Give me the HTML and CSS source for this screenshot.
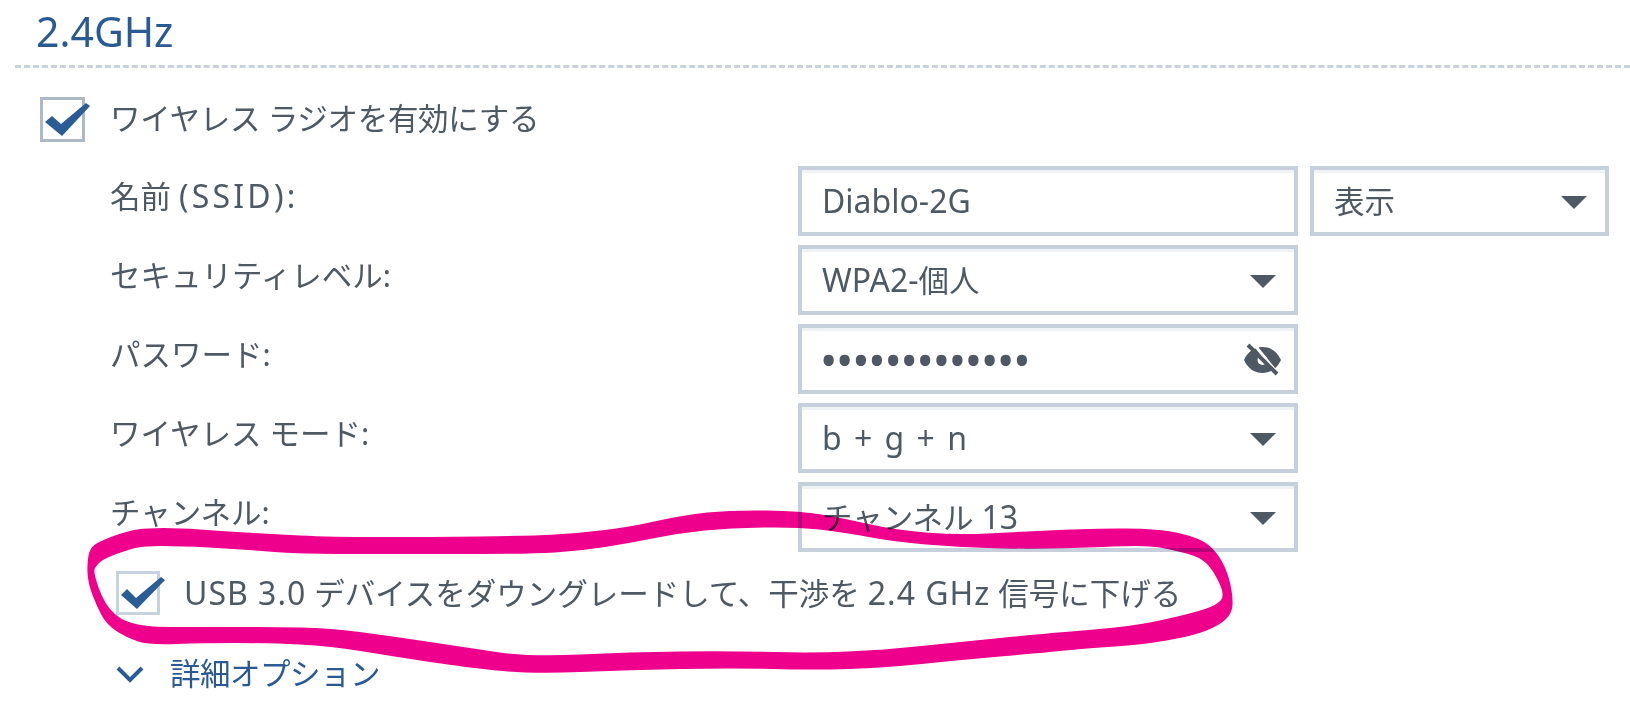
FILE: index.html
```html
<!DOCTYPE html>
<html lang="ja">
<head>
<meta charset="utf-8">
<title>2.4GHz</title>
<link rel="stylesheet" href="styles.css">
</head>
<body>
<main class="page">
  <h1 class="title">2.4GHz</h1>
  <div class="divider"></div>

  <div class="check-row first">
    <svg class="box" viewBox="0 0 45 45"><rect class="box-frame dark" x="1.5" y="1.5" width="42" height="42"/><polygon class="tick" points="5,25 12,19 21,27 46,6 50,9 22,39"/></svg>
    <span class="text">ワイヤレス ラジオを有効にする</span>
  </div>

  <div class="form">
    <span class="label">名前 <span class="lat ssid">(SSID):</span></span>
    <div class="field"><span class="value lat">Diablo-2G</span></div>
    <div class="field"><span class="value">表示</span><svg class="caret" viewBox="0 0 26 13"><polygon points="0,0 26,0 13,13"/></svg></div>

    <span class="label">セキュリティレベル:</span>
    <div class="field"><span class="value"><span class="lat">WPA2-</span>個人</span><svg class="caret" viewBox="0 0 26 13"><polygon points="0,0 26,0 13,13"/></svg></div>
    <span></span>

    <span class="label">パスワード:</span>
    <div class="field"><span class="value dots">•••••••••••••</span>
      <svg class="eye" viewBox="0 0 37 31"><path class="eye-shape" fill-rule="evenodd" d="M0 16C4 7 11 3 18.500 3S33 7 37 16C33 25 26 29 18.500 29S4 25 0 16ZM18.500 11A5 5 0 1 0 18.500 21A5 5 0 1 0 18.500 11Z"/><path class="eye-gap" d="M9 -1L34 30"/><path class="eye-slash" d="M4 1L33 30"/></svg>
    </div>
    <span></span>

    <span class="label">ワイヤレス モード:</span>
    <div class="field"><span class="value lat wide">b + g + n</span><svg class="caret" viewBox="0 0 26 13"><polygon points="0,0 26,0 13,13"/></svg></div>
    <span></span>

    <span class="label">チャンネル:</span>
    <div class="field"><span class="value">チャンネル <span class="lat">13</span></span><svg class="caret" viewBox="0 0 26 13"><polygon points="0,0 26,0 13,13"/></svg></div>
    <span></span>
  </div>

  <div class="check-row second">
    <svg class="box small" viewBox="0 0 44 44"><rect class="box-frame" x="1.500" y="1.500" width="41" height="41"/><polygon class="tick" points="5,24 11,18 20,27 45,6 49,9 21,38"/></svg>
    <span class="text"><span class="lat spaced">USB 3.0</span> デバイスをダウングレードして、干渉を <span class="lat spaced">2.4 GHz</span> 信号に下げる</span>
  </div>

  <div class="advanced">
    <svg class="chevron" viewBox="0 0 28 17"><path d="M2 2L14 14L26 2"/></svg>
    <span class="advanced-text">詳細オプション</span>
  </div>
</main>

<svg class="scribble" viewBox="0 0 1630 708"><path fill-rule="evenodd" d="M87.500 573Q87 563 88.500 555.500Q90 548 95 544.500Q100 541 113.500 536Q127 531 137 529.500Q147 528 163.500 528Q180 528 200 529.500Q220 531 245 532.500Q270 534 300 535.500Q330 537 380 537Q430 537 480 536.500Q530 536 555 534.500Q580 533 605 530Q630 527 656.500 521Q683 515 707.500 512.500Q732 510 766.500 510.500Q801 511 821.500 514.500Q842 518 868.500 524Q895 530 926 532.500Q957 535 987.500 533.500Q1018 532 1048.500 530.500Q1079 529 1118 528.500Q1157 528 1178.500 533Q1200 538 1208.500 545Q1217 552 1222.500 562.500Q1228 573 1230.500 585Q1233 597 1232.500 605Q1232 613 1226 619Q1220 625 1206.500 630.500Q1193 636 1166.500 640.500Q1140 645 1115 646.500Q1090 648 1065 650.500Q1040 653 1000 656.500Q960 660 921.500 664Q883 668 848.500 669Q814 670 773 669Q732 668 681 669Q630 670 580 672Q530 674 496.500 670.500Q463 667 430 662Q397 657 363.500 651.500Q330 646 300 644.500Q270 643 236.500 643Q203 643 176 644Q149 645 138 641.500Q127 638 117 631.500Q107 625 102 616Q97 607 92.500 595Q88 583 87.500 573ZM96 579.500Q94 572 94.500 569.500Q95 567 99 563Q103 559 115 554.500Q127 550 135 548Q143 546 161.500 546Q180 546 208.500 547.500Q237 549 262 551Q287 553 308.500 553.500Q330 554 380 554Q430 554 480 554Q530 554 555 552.500Q580 551 605 547Q630 543 655 538Q680 533 705 530.500Q730 528 763.500 527.500Q797 527 819.500 529.500Q842 532 868.500 537Q895 542 926 544.500Q957 547 987.500 548Q1018 549 1048.500 548.500Q1079 548 1113 546.500Q1147 545 1160 547.500Q1173 550 1186.500 553.500Q1200 557 1206.500 563.500Q1213 570 1219 582.500Q1225 595 1221 600Q1217 605 1205 609Q1193 613 1166.500 619Q1140 625 1115 627.500Q1090 630 1065 632Q1040 634 1000 638Q960 642 921.500 646Q883 650 848.500 651.500Q814 653 773 652Q732 651 681 651.500Q630 652 580 654.500Q530 657 496.500 652Q463 647 430 642Q397 637 363.500 632.500Q330 628 300 627.500Q270 627 236.500 627Q203 627 176 627Q149 627 138 624.500Q127 622 121 618.500Q115 615 110 609Q105 603 101.500 595Q98 587 96 579.500Z"/></svg>
</body>
</html>
```
FILE: styles.css
```css
* { box-sizing: border-box; }
html, body { margin: 0; background: #fff; }
body {
  position: relative;
  width: 1630px;
  height: 708px;
  overflow: hidden;
  font-family: "Noto Sans", "Noto Sans CJK JP", sans-serif;
  color: #4f5964;
  font-size: 30.5px;
}
.title {
  margin: 0;
  height: 65px;
  padding-left: 36px;
  font-size: 41px;
  font-weight: 400;
  line-height: 63px;
  color: #2a5a94;
}
.divider {
  margin-left: 15px;
  border-top: 3px dashed #c9d1dc;
}
.check-row { display: flex; align-items: center; }
.check-row.first { margin-top: 29px; padding-left: 40px; gap: 25px; height: 45px; }
.check-row.first .text { letter-spacing: -0.3px; padding-bottom: 4px; }
.check-row.second { margin-top: 19px; padding-left: 116px; gap: 24px; height: 44px; }
.box { width: 45px; height: 45px; overflow: visible; flex: none; }
.box.small { width: 44px; height: 44px; }
.box-frame { fill: #fff; stroke: #c8d2de; stroke-width: 3; }
.box-frame.dark { stroke: #aeb9c7; }
.tick { fill: #2a5c96; }
.text { white-space: nowrap; line-height: 40px; }
.lat { font-size: 32px; }
.lat.spaced { letter-spacing: 1px; }
.lat.ssid { letter-spacing: 3.2px; }
.lat.wide { letter-spacing: 2px; }
.form {
  margin-top: 24px;
  padding-left: 110px;
  display: grid;
  grid-template-columns: 676px 500px 299px;
  grid-auto-rows: 70px;
  row-gap: 9px;
  column-gap: 12px;
  align-items: center;
}
.label { padding-bottom: 10px; line-height: 40px; white-space: nowrap; }
.field {
  height: 70px;
  border: 4px solid #c5d0dc;
  box-shadow: inset 0 3px 0 #f0f3f6;
  display: flex;
  align-items: center;
  justify-content: space-between;
  padding: 0 18px 0 20px;
}
.value { white-space: nowrap; line-height: 40px; }
.dots { font-size: 46px; letter-spacing: -1.200px; margin-left: -2px; }
.caret { width: 26px; height: 13px; fill: #4f5964; flex: none; margin-top: 2px; }
.eye { width: 37px; height: 31px; flex: none; margin-right: -5px; overflow: visible; }
.eye-shape { fill: #4f5964; }
.eye-gap { stroke: #fff; stroke-width: 3; fill: none; }
.eye-slash { stroke: #4f5964; stroke-width: 4; fill: none; }
.advanced { margin-top: 38px; padding-left: 116px; display: flex; align-items: center; gap: 26px; height: 40px; }
.chevron { width: 28px; height: 17px; fill: none; stroke: #2a5c96; stroke-width: 4; flex: none; margin-top: 2px; }
.advanced-text { color: #2a5a94; line-height: 40px; white-space: nowrap; letter-spacing: -0.5px; }
.scribble {
  position: absolute;
  left: 0;
  top: 0;
  width: 1630px;
  height: 708px;
  fill: #ee008c;
  mix-blend-mode: multiply;
  pointer-events: none;
}
```
